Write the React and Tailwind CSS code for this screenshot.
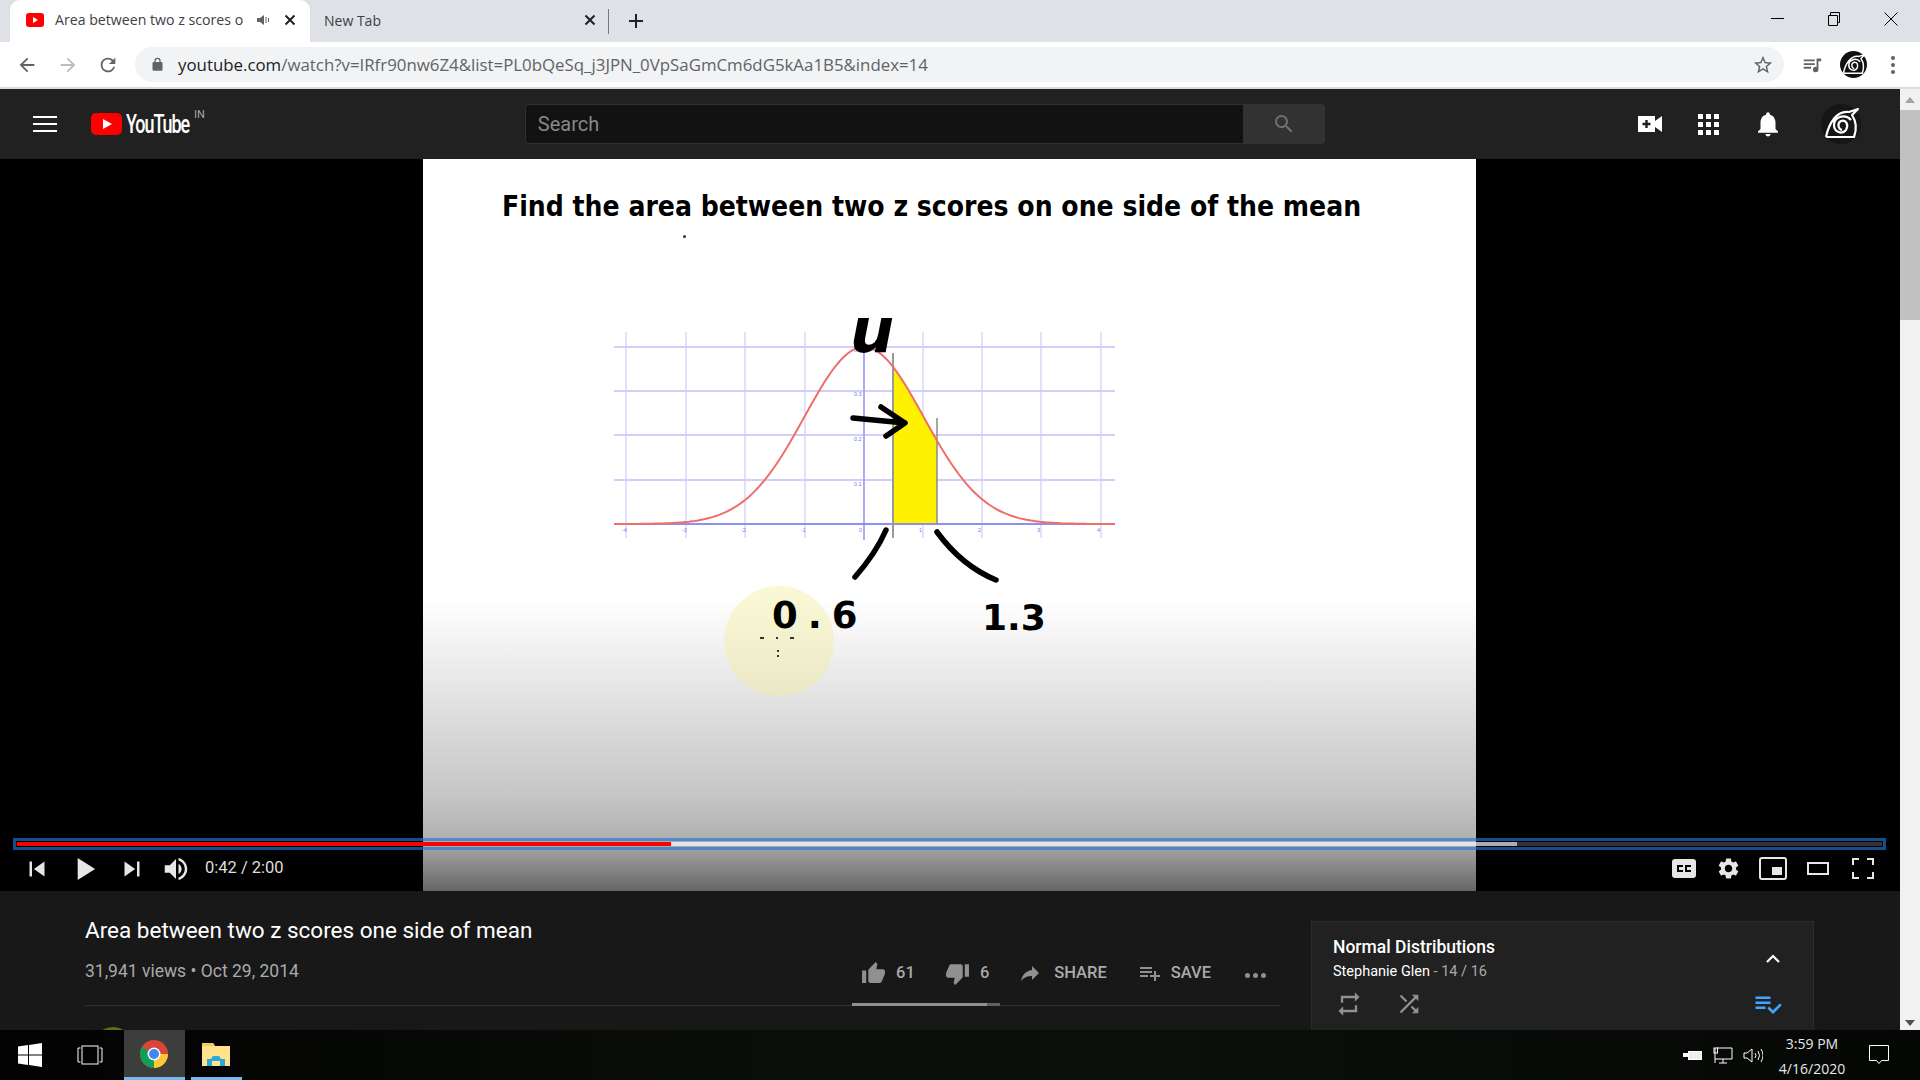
import { useMemo } from 'react'

const ui = { fontFamily: '"Open Sans", "Noto Sans", sans-serif' }
const yt = { fontFamily: 'Roboto, sans-serif' }

const Mi = ({ d, size = 24, className = '', fill = 'currentColor' }) => (
  <svg viewBox="0 0 24 24" width={size} height={size} className={className} fill={fill}>
    <path d={d} />
  </svg>
)

const icons = {
  bell: 'M12 22c1.1 0 2-.9 2-2h-4c0 1.1.9 2 2 2zm6-6v-5c0-3.07-1.63-5.64-4.5-6.32V4c0-.83-.67-1.5-1.5-1.5s-1.5.67-1.5 1.5v.68C7.64 5.36 6 7.92 6 11v5l-2 2v1h16v-1l-2-2z',
  up: 'M1 21h4V9H1v12zm22-11c0-1.1-.9-2-2-2h-6.31l.95-4.57.03-.32c0-.41-.17-.79-.44-1.06L14.17 1 7.59 7.59C7.22 7.95 7 8.45 7 9v10c0 1.1.9 2 2 2h9c.83 0 1.54-.5 1.84-1.22l3.02-7.05c.09-.23.14-.47.14-.73v-2z',
  down: 'M15 3H6c-.83 0-1.54.5-1.84 1.22l-3.02 7.05c-.09.23-.14.47-.14.73v2c0 1.1.9 2 2 2h6.31l-.95 4.57-.03.32c0 .41.17.79.44 1.06L9.83 23l6.59-6.59c.36-.36.58-.86.58-1.41V5c0-1.1-.9-2-2-2zm4 0v12h4V3h-4z',
  share: 'M14 9V5l7 7-7 7v-4.1c-5 0-8.5 1.6-11 5.1 1-5 4-10 11-11z',
  add: 'M14 10H2v2h12v-2zm0-4H2v2h12V6zm4 8v-4h-2v4h-4v2h4v4h2v-4h4v-2h-4zM2 16h8v-2H2v2z',
  check: 'M14 10H2v2h12v-2zm0-4H2v2h12V6zM2 16h8v-2H2v2zm19.5-4.5L23 13l-6.99 7-4.51-4.5L13 14l3.01 3 5.49-5.5z',
  repeat: 'M7 7h10v3l4-4-4-4v3H5v6h2V7zm10 10H7v-3l-4 4 4 4v-3h12v-6h-2v4z',
  shuffle: 'M10.59 9.17L5.41 4 4 5.41l5.17 5.17 1.42-1.41zM14.5 4l2.04 2.04L4 18.59 5.41 20 17.96 7.46 20 9.5V4h-5.5zm.33 9.41l-1.41 1.41 3.13 3.13L14.5 20H20v-5.5l-2.04 2.04-3.13-3.13z',
  gear: 'M19.14 12.94c.04-.3.06-.61.06-.94 0-.32-.02-.64-.07-.94l2.03-1.58c.18-.14.23-.41.12-.61l-1.92-3.32c-.12-.22-.37-.29-.59-.22l-2.39.96c-.5-.38-1.03-.7-1.62-.94l-.36-2.54c-.04-.24-.24-.41-.48-.41h-3.84c-.24 0-.43.17-.47.41l-.36 2.54c-.59.24-1.13.57-1.62.94l-2.39-.96c-.22-.08-.47 0-.59.22L2.74 8.87c-.12.21-.08.47.12.61l2.03 1.58c-.05.3-.09.63-.09.94s.02.64.07.94l-2.03 1.58c-.18.14-.23.41-.12.61l1.92 3.32c.12.22.37.29.59.22l2.39-.96c.5.38 1.03.7 1.62.94l.36 2.54c.05.24.24.41.48.41h3.84c.24 0 .44-.17.47-.41l.36-2.54c.59-.24 1.13-.56 1.62-.94l2.39.96c.22.08.47 0 .59-.22l1.92-3.32c.12-.22.07-.47-.12-.61l-2.01-1.58zM12 15.6c-1.98 0-3.6-1.62-3.6-3.6s1.62-3.6 3.6-3.6 3.6 1.62 3.6 3.6-1.62 3.6-3.6 3.6z',
  reload: 'M17.65 6.35A7.96 7.96 0 0 0 12 4a8 8 0 1 0 7.73 10h-2.08A6 6 0 1 1 12 6c1.66 0 3.14.69 4.22 1.78L13 11h7V4l-2.35 2.35z',
  back: 'M20 11H7.83l5.59-5.59L12 4l-8 8 8 8 1.41-1.41L7.83 13H20v-2z',
  forward: 'M12 4l-1.41 1.41L16.17 11H4v2h12.17l-5.58 5.59L12 20l8-8-8-8z',
  lock: 'M18 8h-1V6a5 5 0 0 0-10 0v2H6a2 2 0 0 0-2 2v10a2 2 0 0 0 2 2h12a2 2 0 0 0 2-2V10a2 2 0 0 0-2-2zM9 6a3 3 0 0 1 6 0v2H9V6z',
  star: 'M22 9.24l-7.19-.62L12 2 9.19 8.63 2 9.24l5.46 4.73L5.82 21 12 17.27 18.18 21l-1.63-7.03L22 9.24zM12 15.4l-3.76 2.27 1-4.28-3.32-2.88 4.38-.38L12 6.1l1.71 4.04 4.38.38-3.32 2.88 1 4.28L12 15.4z',
  media: 'M3 6h12v2H3V6zm0 4h12v2H3v-2zm0 4h8v2H3v-2zm14-9h5v3h-3v9a3 3 0 1 1-2-2.83V5z',
  search: 'M15.5 14h-.79l-.28-.27A6.47 6.47 0 0 0 16 9.5 6.5 6.5 0 1 0 9.5 16c1.61 0 3.09-.59 4.23-1.57l.27.28v.79l5 5L20.49 19l-4.99-5zm-6 0A4.5 4.5 0 1 1 14 9.5 4.5 4.5 0 0 1 9.5 14z',
  prev: 'M6 6h2v12H6zm3.5 6l8.5 6V6z',
  next: 'M6 18l8.5-6L6 6v12zM16 6v12h2V6h-2z',
  play: 'M8 5v14l11-7z',
  vol: 'M3 9v6h4l5 5V4L7 9H3zm13.5 3c0-1.77-1.02-3.29-2.5-4.03v8.05c1.48-.73 2.5-2.25 2.5-4.02zM14 3.23v2.06c2.89.86 5 3.54 5 6.71s-2.11 5.85-5 6.71v2.06c4.01-.91 7-4.49 7-8.77s-2.99-7.86-7-8.77z',
}

// swirl emblem used for the profile picture
const Leaf = ({ size, bg }) => (
  <svg viewBox="0 0 40 40" width={size} height={size}>
    <circle cx="20" cy="20" r="20" fill={bg} />
    <path
      d="M5 33 L33 33 C36 25 35 17 31 11 L37 5 L28 8 C16 6 8 19 5 33 M21 26 C17 25 16 19 20 17 C25 15 28 21 25 26 C21 31 13 28 13 21 C13 13 24 9 30 16"
      fill="none"
      stroke="#fff"
      strokeWidth="2.2"
      strokeLinejoin="round"
    />
  </svg>
)

function Chart() {
  // bell curve in page pixels, same proportions as the video frame
  const curve = useMemo(() => {
    const y = x => 524 - 177 * Math.exp(-0.5 * Math.pow((x - 864) / 59.5, 2))
    const line = []
    for (let x = 614; x <= 1115; x += 3) line.push(`${x},${y(x).toFixed(1)}`)
    const fill = ['893,524']
    for (let x = 893; x <= 937; x += 2) fill.push(`${x},${y(x).toFixed(1)}`)
    fill.push('937,524')
    return { line: line.join(' '), fill: fill.join(' ') }
  }, [])

  const cols = [626, 686, 745, 805, 923, 982, 1041, 1101]
  const rows = [347, 391, 435, 480]
  const xLabels = [[622, '-4'], [682, '-3'], [741, '-2'], [801, '-1'], [859, '0'], [919, '1'], [978, '2'], [1037, '3'], [1097, '4']]
  const yLabels = [[352, '0.4'], [396, '0.3'], [441, '0.2'], [486, '0.1']]

  return (
    <svg viewBox="600 280 540 440" width="540" height="440" className="block">
      <circle cx="779" cy="641" r="55" fill="#f4f0a0" fillOpacity="0.45" />
      {cols.map(x => <line key={x} x1={x} x2={x} y1="332" y2="538" stroke="#d2d2fa" strokeWidth="1.3" />)}
      {rows.map(y => <line key={y} x1="614" x2="1115" y1={y} y2={y} stroke="#cfcffa" strokeWidth="1.8" />)}
      <polygon points={curve.fill} fill="#fff200" />
      <line x1="864" x2="864" y1="347" y2="540" stroke="#a4a4f2" strokeWidth="1.8" />
      <line x1="614" x2="1115" y1="524" y2="524" stroke="#8f8ff0" strokeWidth="2.2" />
      <line x1="893" x2="893" y1="353" y2="538" stroke="#9a9a9a" strokeWidth="2" />
      <line x1="937" x2="937" y1="418" y2="524" stroke="#8a8a8a" strokeWidth="1.5" />
      <polyline points={curve.line} fill="none" stroke="#ee6f6a" strokeWidth="2" />
      <g fill="#7a7ad8" fontSize="5.5" fontFamily="Liberation Sans">
        {xLabels.map(([x, t]) => <text key={t} x={x} y="532">{t}</text>)}
        {yLabels.map(([y, t]) => <text key={t} x="854" y={y}>{t}</text>)}
      </g>
      <g fill="none" stroke="#000" strokeWidth="5.5" strokeLinecap="round" strokeLinejoin="round">
        <path d="M853 418 L905 423 M881 407 L905 423 L886 436" />
        <path d="M886 530 Q876 553 855 577" />
        <path d="M937 532 Q962 566 996 580" />
      </g>
      <g fill="#000" fontFamily="DejaVu Sans" fontWeight="700">
        <text x="850" y="352" fontSize="62" fontStyle="italic">u</text>
        <text x="772" y="628" fontSize="37" letterSpacing="10">0.6</text>
        <text x="982" y="630" fontSize="36">1.3</text>
      </g>
      <g fill="#333">
        <rect x="760" y="637" width="4" height="2" />
        <rect x="776" y="637" width="2" height="2" />
        <rect x="790" y="637" width="4" height="2" />
        <rect x="777" y="650" width="2" height="2" />
        <rect x="777" y="655" width="2" height="2" />
      </g>
    </svg>
  )
}

function Player() {
  return (
    <div className="relative h-[732px] bg-black flex justify-center pr-px shrink-0">
      <div className="w-[1053px] h-full overflow-hidden bg-[linear-gradient(#fff_441px,#e2e2e2_541px,#c4c4c4_641px,#b0b0b0_680px,#666_732px)]">
        <div className="mt-[29px] ml-[79px] text-[28px] leading-[38px] font-bold text-black whitespace-nowrap" style={{ fontFamily: '"DejaVu Sans Condensed", "DejaVu Sans", sans-serif' }}>
          Find the area between two z scores on one side of the mean
        </div>
        <div className="w-[3px] h-[3px] rounded-full bg-[#333] ml-[260px] mt-[9px]" />
        <div className="ml-[177px] mt-[42px]"><Chart /></div>
      </div>

      <div className="absolute left-[13px] right-[14px] top-[679px] h-[12px] border-[3px] border-[#1e78d7]/65 p-px">
        <div className="h-full flex bg-white/20">
          <div className="w-[654px] bg-[#ff0000]" />
          <div className="w-[846px] bg-white/60" />
        </div>
      </div>

      <div className="absolute left-0 right-0 top-[689px] h-[41px] flex items-center text-[#e6e6e6]">
        <Mi d={icons.prev} size={30} className="ml-[22px]" />
        <Mi d={icons.play} size={38} className="ml-[13px]" />
        <Mi d={icons.next} size={30} className="ml-[14px]" />
        <Mi d={icons.vol} size={30} className="ml-[14px]" />
        <span className="ml-[14px] text-[16.5px] text-[#dddddd]" style={yt}>0:42 / 2:00</span>
        <div className="ml-auto mr-[26px] flex items-center">
          <svg width="24" height="19" viewBox="0 0 24 19"><rect width="24" height="19" rx="3" fill="#e6e6e6" /><path d="M11 7H6v5h5M19 7h-5v5h5" fill="none" stroke="#000" strokeWidth="2" /></svg>
          <Mi d={icons.gear} size={25} className="ml-[20px]" />
          <svg width="28" height="23" viewBox="0 0 28 23" className="ml-[18px]"><rect x="1" y="1" width="26" height="21" rx="2" fill="none" stroke="#e6e6e6" strokeWidth="2" /><rect x="13" y="10" width="10" height="8" fill="#e6e6e6" /></svg>
          <svg width="22" height="13" viewBox="0 0 22 13" className="ml-[20px]"><rect x="1" y="1" width="20" height="11" fill="none" stroke="#e6e6e6" strokeWidth="2" /></svg>
          <svg width="22" height="21" viewBox="0 0 22 21" className="ml-[23px]"><path d="M1 7V1h6M15 1h6v6M21 14v6h-6M7 20H1v-6" fill="none" stroke="#e6e6e6" strokeWidth="2" /></svg>
        </div>
      </div>
    </div>
  )
}

function Info() {
  return (
    <div className="flex flex-1 min-h-0 bg-[#181818]" style={yt}>
      <div className="ml-[85px] w-[1196px] shrink-0">
        <h1 className="pt-[26px] text-[22.5px] leading-[26px] text-white font-normal whitespace-nowrap">Area between two z scores one side of mean</h1>
        <div className="relative flex items-start h-[63px] border-b border-[#303030]">
          <span className="mt-[16px] text-[17.5px] leading-[24px] text-[#aaaaaa]">31,941 views • Oct 29, 2014</span>
          <div className="ml-auto flex items-center h-[24px] text-[#909090] mt-[18px] mr-[15px]">
            <Mi d={icons.up} size={25} />
            <span className="ml-[10px] text-[16.5px] font-medium text-[#aaaaaa]">61</span>
            <Mi d={icons.down} size={25} className="ml-[30px]" />
            <span className="ml-[10px] text-[16.5px] font-medium text-[#aaaaaa]">6</span>
            <Mi d={icons.share} size={24} className="ml-[29px]" />
            <span className="ml-[12px] text-[16.5px] font-medium text-[#aaaaaa]">SHARE</span>
            <Mi d={icons.add} size={24} className="ml-[31px]" />
            <span className="ml-[9px] text-[16.5px] font-medium text-[#aaaaaa]">SAVE</span>
            <div className="ml-[34px] mt-[4px] flex gap-[3px]">
              <i className="w-[5px] h-[5px] rounded-full bg-[#909090]" />
              <i className="w-[5px] h-[5px] rounded-full bg-[#909090]" />
              <i className="w-[5px] h-[5px] rounded-full bg-[#909090]" />
            </div>
          </div>
          <div className="absolute left-[767px] -bottom-px w-[148px] h-[3px] flex">
            <div className="w-[135px] bg-[#909090]" />
            <div className="flex-1 bg-[#606060]" />
          </div>
        </div>
        <div className="w-10 h-10 rounded-full bg-[#6b6a10] ml-[8px] mt-[21px]" />
      </div>

      <div className="ml-[30px] mt-[30px] w-[503px] h-[140px] shrink-0 bg-[#212121] border border-[#2c2c2c] relative">
        <div className="pl-[21px] pt-[14px] text-[17.5px] leading-[22px] font-medium text-white">Normal Distributions</div>
        <div className="pl-[21px] pt-[4px] text-[14.5px] leading-[20px] text-[#aaaaaa]"><span className="text-white">Stephanie Glen</span> - 14 / 16</div>
        <div className="flex items-center pl-[23px] pr-[30px] mt-[7px] text-[#909090]">
          <Mi d={icons.repeat} size={28} />
          <Mi d={icons.shuffle} size={28} className="ml-[32px]" />
          <Mi d={icons.check} size={30} className="ml-auto text-[#3ea6ff]" />
        </div>
        <svg width="16" height="10" viewBox="0 0 16 10" className="absolute left-[453px] top-[32px]"><path d="M2 8l6-6 6 6" fill="none" stroke="#fff" strokeWidth="2.2" /></svg>
      </div>
    </div>
  )
}

export default function App() {
  return (
    <div className="w-[1920px] h-[1080px] flex flex-col overflow-hidden bg-white" style={ui}>
      {/* tab strip */}
      <div className="h-[42px] shrink-0 bg-[#dee1e6] flex items-end pl-[10px] text-[#3c4043] text-[14px]">
        <div className="w-[300px] h-[42px] bg-white rounded-t-[10px] flex items-center pl-[16px] pb-[2px]">
          <svg width="18" height="14" viewBox="0 0 18 14"><rect width="18" height="14" rx="3" fill="#f00" /><path d="M7 4l5 3-5 3z" fill="#fff" /></svg>
          <span className="ml-[11px] w-[190px] overflow-hidden whitespace-nowrap text-[14.15px]">Area between two z scores o</span>
          <svg width="14" height="14" viewBox="0 0 14 14" className="ml-[11px]"><path d="M1 5v4h3l4 3V2L4 5z" fill="#5f6368" /><path d="M10 4v6M12.500 5v4" stroke="#5f6368" /></svg>
          <svg width="12" height="12" viewBox="0 0 12 12" className="ml-[14px]"><path d="M1.500 1.500l9 9M10.500 1.500l-9 9" stroke="#202124" strokeWidth="2" /></svg>
        </div>
        <div className="w-[288px] h-[42px] flex items-center pl-[14px] pb-[2px]">
          <span>New Tab</span>
          <svg width="12" height="12" viewBox="0 0 12 12" className="ml-auto mr-[2px]"><path d="M1.500 1.500l9 9M10.500 1.500l-9 9" stroke="#202124" strokeWidth="2" /></svg>
        </div>
        <div className="w-px h-[25px] bg-[#777] mb-[8px] ml-[10px]" />
        <svg width="16" height="16" viewBox="0 0 16 16" className="ml-[19px] mb-[13px]"><path d="M8 1v14M1 8h14" stroke="#202124" strokeWidth="2" /></svg>
        <div className="ml-auto h-[42px] flex items-start pt-[12px] pr-[22px]">
          <div className="w-[13px] h-px bg-black mt-[6px]" />
          <svg width="14" height="14" viewBox="0 0 14 14" className="ml-[43px]"><path d="M1.500 3.500h9v10h-9zM3.500 3.500v-3h9v10h-2" fill="none" stroke="#000" /></svg>
          <svg width="14" height="14" viewBox="0 0 14 14" className="ml-[43px]"><path d="M.5.5l13 13M13.500.5l-13 13" stroke="#000" /></svg>
        </div>
      </div>

      {/* address bar */}
      <div className="h-[45px] shrink-0 bg-white flex items-center">
        <Mi d={icons.back} size={22} className="ml-[16px] text-[#5f6368]" />
        <Mi d={icons.forward} size={22} className="ml-[19px] text-[#babcbe]" />
        <Mi d={icons.reload} size={22} className="ml-[18px] text-[#5f6368]" />
        <div className="ml-[16px] w-[1649px] h-[35px] rounded-full bg-[#f1f3f4] flex items-center">
          <Mi d={icons.lock} size={15} className="ml-[15px] text-[#5f6368]" />
          <span className="ml-[13px] text-[16.85px] text-[#5f6368] whitespace-nowrap"><span className="text-[#202124]">youtube.com</span>/watch?v=IRfr90nw6Z4&amp;list=PL0bQeSq_j3JPN_0VpSaGmCm6dG5kAa1B5&amp;index=14</span>
          <Mi d={icons.star} size={22} className="ml-auto mr-[10px] text-[#5f6368]" />
        </div>
        <Mi d={icons.media} size={22} className="ml-[17px] text-[#5f6368]" />
        <div className="ml-[17px]"><Leaf size={27} bg="#111" /></div>
        <div className="ml-[24px] flex flex-col gap-[3px]">
          <i className="w-[4px] h-[4px] rounded-full bg-[#5f6368]" />
          <i className="w-[4px] h-[4px] rounded-full bg-[#5f6368]" />
          <i className="w-[4px] h-[4px] rounded-full bg-[#5f6368]" />
        </div>
      </div>
      <div className="h-[2px] shrink-0 bg-[#dadce0]" />

      {/* page + scrollbar */}
      <div className="flex h-[941px] shrink-0">
        <div className="w-[1900px] flex flex-col overflow-hidden">
          <header className="h-[70px] shrink-0 bg-[#212121] flex items-center" style={yt}>
            <svg width="24" height="16" viewBox="0 0 24 16" className="ml-[33px]"><path d="M0 1h24M0 8h24M0 15h24" stroke="#fff" strokeWidth="2" /></svg>
            <svg width="31" height="22" viewBox="0 0 31 22" className="ml-[34px]"><rect width="31" height="22" rx="5" fill="#f00" /><path d="M12 6l9 5-9 5z" fill="#fff" /></svg>
            <span className="ml-[4px] w-[68px] text-[25px] leading-none font-medium text-white tracking-[-1.5px] origin-left scale-x-[.72] whitespace-nowrap">YouTube</span>
            <span className="text-[11px] text-[#aaa] self-start mt-[18px]">IN</span>
            <div className="ml-[320px] w-[718px] h-[40px] bg-[#121212] border border-[#303030] border-r-0 rounded-l-sm flex items-center pl-[12px] text-[20px] text-[#888888]">Search</div>
            <div className="w-[82px] h-[40px] bg-[#323232] rounded-r-sm flex items-center justify-center text-[#717171]"><Mi d={icons.search} size={24} /></div>
            <svg width="24" height="18" viewBox="0 0 24 18" className="ml-[313px]"><path d="M0 1h17v5l7-5v16l-7-5v5H0z" fill="#fff" /><path d="M8.500 5v8M4.500 9h8" stroke="#212121" strokeWidth="2.4" /></svg>
            <svg width="21" height="21" viewBox="0 0 21 21" className="ml-[36px]" fill="#fff"><rect width="5" height="5" /><rect x="8" width="5" height="5" /><rect x="16" width="5" height="5" /><rect y="8" width="5" height="5" /><rect x="8" y="8" width="5" height="5" /><rect x="16" y="8" width="5" height="5" /><rect y="16" width="5" height="5" /><rect x="8" y="16" width="5" height="5" /><rect x="16" y="16" width="5" height="5" /></svg>
            <Mi d={icons.bell} size={30} className="ml-[34px] text-white" />
            <div className="ml-[38px]"><Leaf size={40} bg="#161616" /></div>
          </header>
          <Player />
          <Info />
        </div>
        <div className="w-[20px] bg-[#f1f1f1] flex flex-col items-center relative">
          <div className="h-[21px] flex items-center"><div className="w-0 h-0 border-x-[5px] border-x-transparent border-b-[6px] border-b-[#a3a3a3]" /></div>
          <div className="w-full h-[210px] bg-[#c1c1c1]" />
          <div className="mt-auto mb-[4px] w-0 h-0 border-x-[5px] border-x-transparent border-t-[6px] border-t-[#505050]" />
        </div>
      </div>

      {/* windows taskbar */}
      <div className="h-[50px] shrink-0 flex items-stretch text-white bg-[linear-gradient(90deg,#020202,#0a0e08_40%,#0b100a_60%,#050705)]" style={ui}>
        <svg width="24" height="24" viewBox="0 0 24 24" className="ml-[18px] self-center" fill="#fff"><path d="M0 3.500l10-1.400v9.400H0zM11 2l13-2v11.500H11zM0 12.500h10v9.400L0 20.500zM11 12.500h13V24l-13-2z" /></svg>
        <svg width="26" height="20" viewBox="0 0 26 20" className="ml-[35px] self-center"><path d="M3.500 3H1v14h2.500M22.500 3H25v14h-2.500" fill="none" stroke="#fff" /><rect x="5" y="1" width="16" height="18" fill="none" stroke="#fff" /></svg>
        <div className="ml-[21px] w-[61px] pr-[2px] bg-[#3c3e3c] border-b-[3px] border-[#76b9ed] flex items-center justify-center">
          <svg width="28" height="28" viewBox="0 0 28 28">
            <circle cx="14" cy="14" r="14" fill="#db4437" />
            <path d="M14 14L1.900 7A14 14 0 0 0 14 28z" fill="#0f9d58" />
            <path d="M14 14H28A14 14 0 0 1 14 28z" fill="#fcc934" />
            <circle cx="14" cy="14" r="6.500" fill="#fff" />
            <circle cx="14" cy="14" r="5" fill="#4285f4" />
          </svg>
        </div>
        <div className="ml-[6px] w-[51px] pr-[2px] border-b-[3px] border-[#76b9ed] flex items-center justify-center">
          <svg width="28" height="24" viewBox="0 0 28 24">
            <path d="M0 1h11l2 3h15v20H0z" fill="#ffe28a" />
            <path d="M0 1h11l2 3H0z" fill="#f4c95d" />
            <path d="M5 24v-7h4l2-3h6l2 3h4v7h-5v-5H10v5z" fill="#2aa8e0" />
          </svg>
        </div>
        <div className="ml-auto flex items-center pr-[31px]">
          <svg width="20" height="12" viewBox="0 0 20 12"><rect x="5.500" y="2.500" width="13" height="8" fill="#eee" stroke="#fff" /><path d="M0 4h5v4H0z" fill="#fff" /></svg>
          <svg width="20" height="17" viewBox="0 0 20 17" className="ml-[10px]"><path d="M4 1h15v11H2M2 1v15M6 16h8M10 12v4" fill="none" stroke="#fff" /><rect x="1" y="1" width="3.500" height="5" fill="none" stroke="#fff" /></svg>
          <svg width="20" height="17" viewBox="0 0 20 17" className="ml-[10px]"><path d="M1 6h3l5-4v13l-5-4H1z" fill="none" stroke="#fff" /><path d="M12 6q2 2.500 0 5M15 4q3 4.500 0 9M18 2q4 6.500 0 13" fill="none" stroke="#fff" /></svg>
          <div className="ml-[9px] w-[80px] text-center text-[14px] leading-[25px] pt-[1px] text-[#e8e8e8]">
            <div>3:59 PM</div>
            <div>4/16/2020</div>
          </div>
          <svg width="20" height="20" viewBox="0 0 20 20" className="ml-[17px]"><path d="M.5.5h19v15h-7l-2.500 3-2.500-3h-7z" fill="none" stroke="#fff" /></svg>
        </div>
      </div>
    </div>
  )
}
